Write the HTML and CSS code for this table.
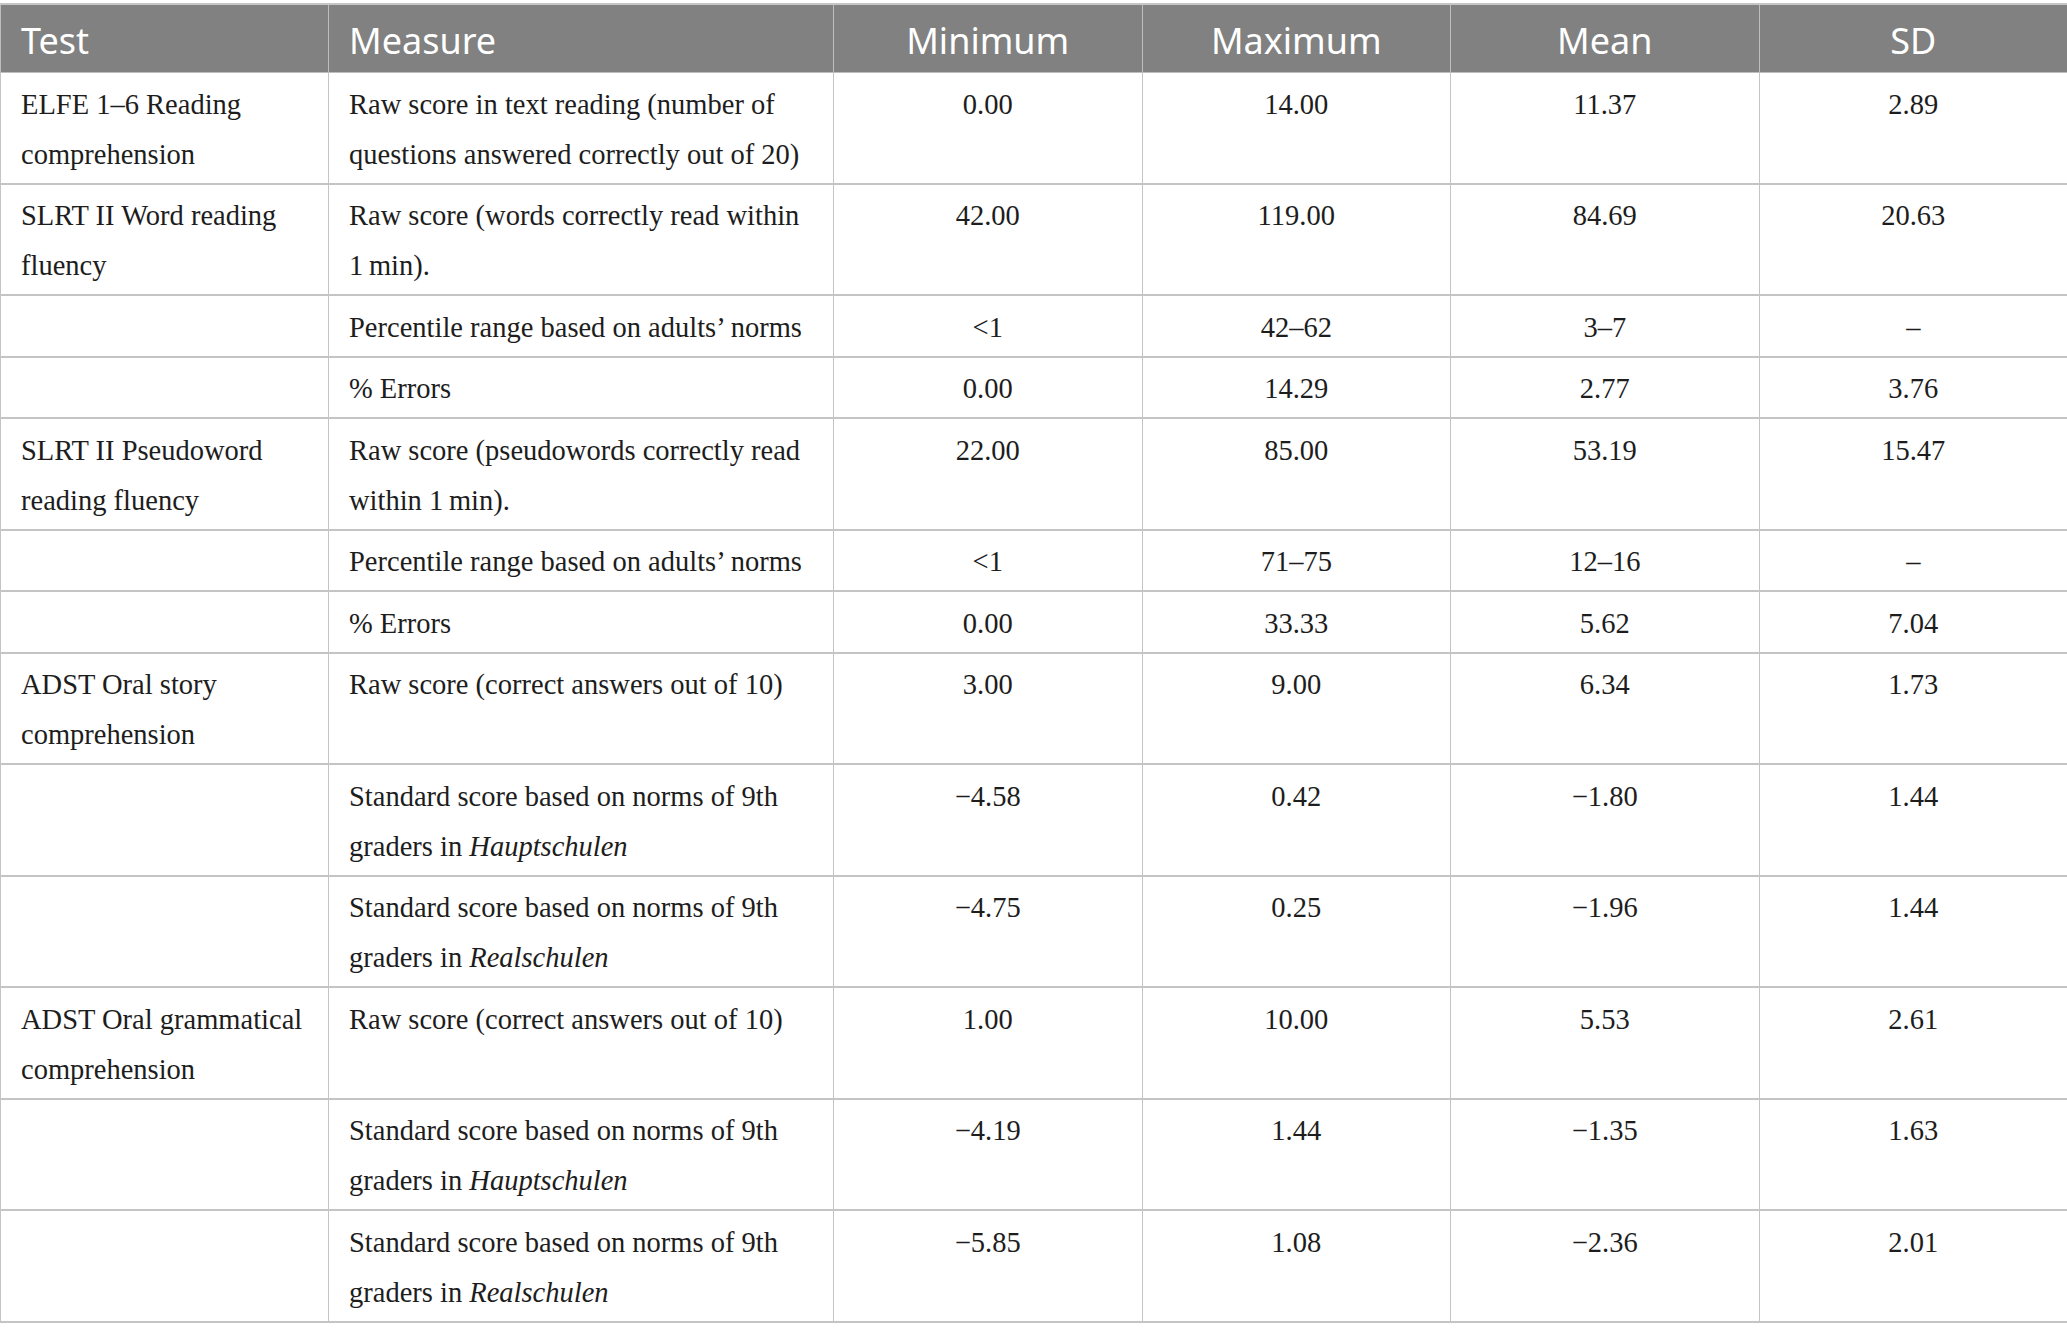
FILE: index.html
```html
<!DOCTYPE html>
<html>
	<head>
		<title>Reading and comprehension measures</title>
		<link rel="stylesheet" href="styles.css">
	</head>
	<body>
		<table class="results">
			<colgroup>
				<col class="col-test">
				<col class="col-measure">
				<col class="col-num">
				<col class="col-num">
				<col class="col-num">
				<col class="col-num">
			</colgroup>
			<thead>
				<tr>
					<th class="left">Test</th>
					<th class="left">Measure</th>
					<th>Minimum</th>
					<th>Maximum</th>
					<th>Mean</th>
					<th>SD</th>
				</tr>
			</thead>
			<tbody>
				<tr>
					<td>ELFE 1–6 Reading comprehension</td>
					<td>Raw score in text reading (number of questions answered correctly out of 20)</td>
					<td class="num">0.00</td>
					<td class="num">14.00</td>
					<td class="num">11.37</td>
					<td class="num">2.89</td>
				</tr>
				<tr>
					<td>SLRT II Word reading fluency</td>
					<td>Raw score (words correctly read within 1&#8239;min).</td>
					<td class="num">42.00</td>
					<td class="num">119.00</td>
					<td class="num">84.69</td>
					<td class="num">20.63</td>
				</tr>
				<tr>
					<td></td>
					<td>Percentile range based on adults’ norms</td>
					<td class="num">&lt;1</td>
					<td class="num">42–62</td>
					<td class="num">3–7</td>
					<td class="num">–</td>
				</tr>
				<tr>
					<td></td>
					<td>% Errors</td>
					<td class="num">0.00</td>
					<td class="num">14.29</td>
					<td class="num">2.77</td>
					<td class="num">3.76</td>
				</tr>
				<tr>
					<td>SLRT II Pseudoword reading fluency</td>
					<td>Raw score (pseudowords correctly read within 1&#8239;min).</td>
					<td class="num">22.00</td>
					<td class="num">85.00</td>
					<td class="num">53.19</td>
					<td class="num">15.47</td>
				</tr>
				<tr>
					<td></td>
					<td>Percentile range based on adults’ norms</td>
					<td class="num">&lt;1</td>
					<td class="num">71–75</td>
					<td class="num">12–16</td>
					<td class="num">–</td>
				</tr>
				<tr>
					<td></td>
					<td>% Errors</td>
					<td class="num">0.00</td>
					<td class="num">33.33</td>
					<td class="num">5.62</td>
					<td class="num">7.04</td>
				</tr>
				<tr>
					<td>ADST Oral story comprehension</td>
					<td>Raw score (correct answers out of 10)</td>
					<td class="num">3.00</td>
					<td class="num">9.00</td>
					<td class="num">6.34</td>
					<td class="num">1.73</td>
				</tr>
				<tr>
					<td></td>
					<td>Standard score based on norms of 9th graders in <i>Hauptschulen</i></td>
					<td class="num">−4.58</td>
					<td class="num">0.42</td>
					<td class="num">−1.80</td>
					<td class="num">1.44</td>
				</tr>
				<tr>
					<td></td>
					<td>Standard score based on norms of 9th graders in <i>Realschulen</i></td>
					<td class="num">−4.75</td>
					<td class="num">0.25</td>
					<td class="num">−1.96</td>
					<td class="num">1.44</td>
				</tr>
				<tr>
					<td>ADST Oral grammatical comprehension</td>
					<td>Raw score (correct answers out of 10)</td>
					<td class="num">1.00</td>
					<td class="num">10.00</td>
					<td class="num">5.53</td>
					<td class="num">2.61</td>
				</tr>
				<tr>
					<td></td>
					<td>Standard score based on norms of 9th graders in <i>Hauptschulen</i></td>
					<td class="num">−4.19</td>
					<td class="num">1.44</td>
					<td class="num">−1.35</td>
					<td class="num">1.63</td>
				</tr>
				<tr>
					<td></td>
					<td>Standard score based on norms of 9th graders in <i>Realschulen</i></td>
					<td class="num">−5.85</td>
					<td class="num">1.08</td>
					<td class="num">−2.36</td>
					<td class="num">2.01</td>
				</tr>
			</tbody>
		</table>
	</body>
</html>
```

FILE: styles.css
```css
body {
margin: 0;
background-color: white;
font-family: "Liberation Serif", "Times New Roman", serif;
}

.results {
width: 2067px;
margin-top: 3px;
border-collapse: collapse;
table-layout: fixed;
border-top: 2px solid #c6c6c6;
border-bottom: 2px solid #c6c6c6;
}

.col-test {
width: 328px;
}

.col-measure {
width: 505px;
}

.col-num {
width: 308.5px;
}

.results th {
background-color: #808180;
color: white;
font-family: "Noto Sans", "Open Sans", sans-serif;
font-size: 36px;
font-weight: normal;
line-height: 50px;
text-align: center;
padding: 11px 20px 6px;
border-left: 1px solid #bdbdbd;
border-right: 1px solid #bdbdbd;
border-bottom: 1px solid #bdbdbd;
}

.results th.left {
text-align: left;
}

.results td {
color: #1d1d1d;
font-size: 28.5px;
line-height: 50px;
vertical-align: top;
padding: 6.5px 20px 3px;
border: 1px solid #c4c4c4;
border-bottom-width: 2px;
}

.results td.num {
text-align: center;
}
```
